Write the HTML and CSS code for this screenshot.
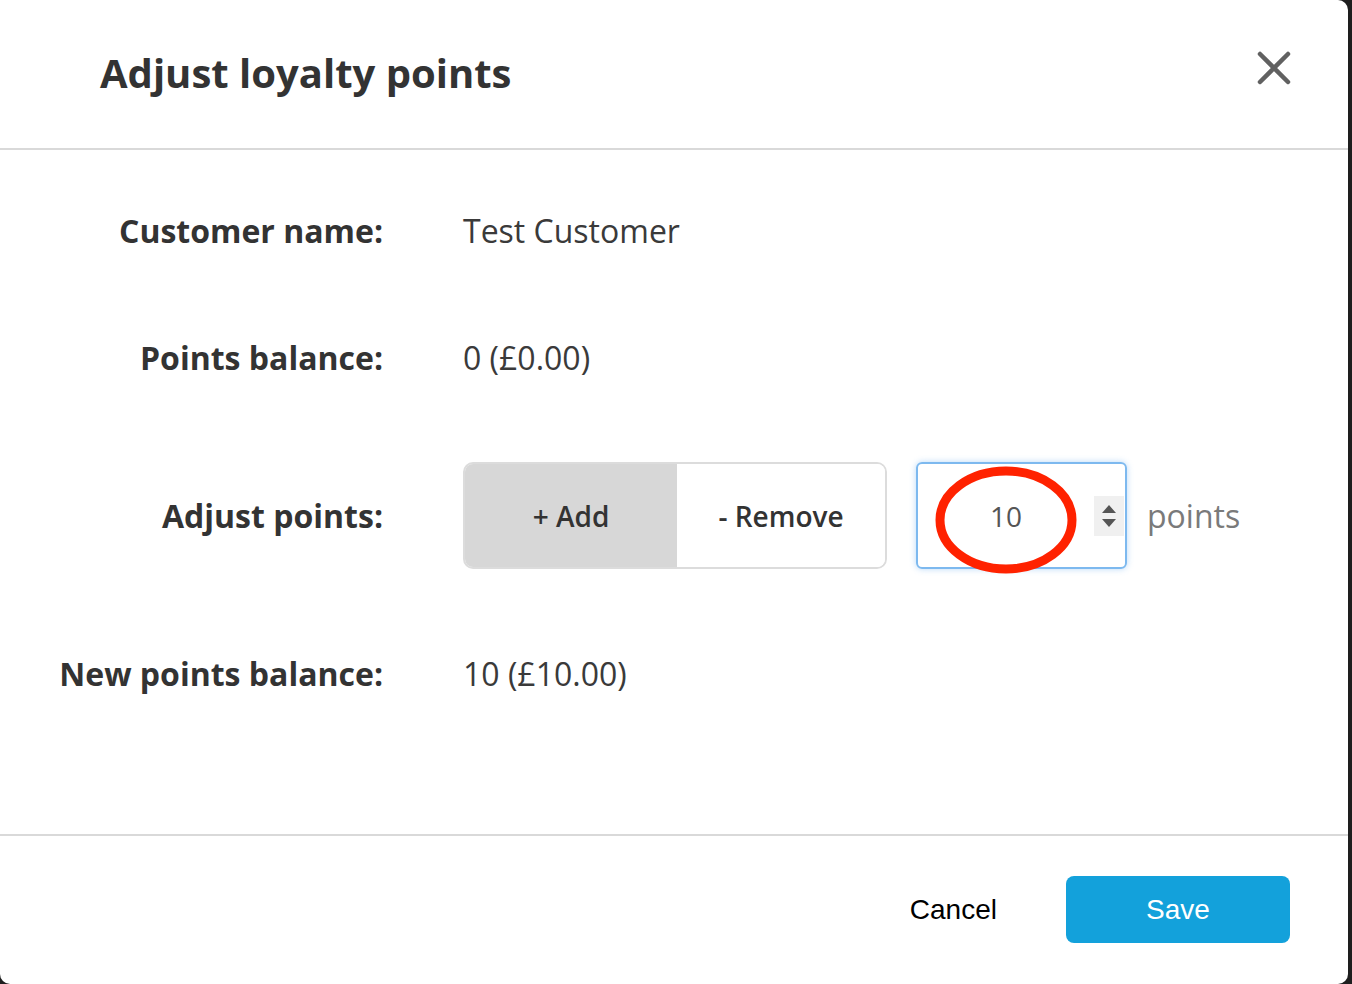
FILE: index.html
```html
<!DOCTYPE html>
<html lang="en">
<head>
<meta charset="utf-8">
<title>Adjust loyalty points</title>
<link rel="stylesheet" href="styles.css">
</head>
<body>
<div class="modal">
  <header class="modal-header">
    <h1 class="modal-title">Adjust loyalty points</h1>
    <button class="close-btn" aria-label="Close">
      <svg width="34" height="34" viewBox="0 0 34 34"><path d="M3 3 L31 31 M31 3 L3 31" stroke="#616161" stroke-width="4.5" stroke-linecap="round" fill="none"/></svg>
    </button>
  </header>
  <section class="modal-body">
    <div class="row row-first">
      <div class="label">Customer name:</div>
      <div class="value">Test Customer</div>
    </div>
    <div class="row row-second">
      <div class="label">Points balance:</div>
      <div class="value">0 (£0.00)</div>
    </div>
    <div class="row row-adjust">
      <div class="label">Adjust points:</div>
      <div class="value adjust-controls">
        <div class="segmented">
          <button class="seg seg-active">+ Add</button>
          <button class="seg">- Remove</button>
        </div>
        <div class="number-input">
          <span class="number-value">10</span>
          <span class="spinner">
            <svg width="30" height="40" viewBox="0 0 30 40"><path d="M8 17 L15 9 L22 17 Z M8 23 L22 23 L15 31 Z" fill="#555"/></svg>
          </span>
          <svg class="annotation" width="142" height="108" viewBox="0 0 142 108"><ellipse cx="71" cy="54" rx="66" ry="49" fill="none" stroke="#ff2200" stroke-width="9"/></svg>
        </div>
        <span class="unit">points</span>
      </div>
    </div>
    <div class="row row-last">
      <div class="label">New points balance:</div>
      <div class="value">10 (£10.00)</div>
    </div>
  </section>
  <footer class="modal-footer">
    <button class="btn-cancel">Cancel</button>
    <button class="btn-save">Save</button>
  </footer>
</div>
</body>
</html>
```
FILE: styles.css
```css
html, body {
  margin: 0;
  padding: 0;
}
body {
  background: #1e1e1e;
  width: 1352px;
  height: 984px;
  overflow: hidden;
  font-family: "Open Sans", "Noto Sans", sans-serif;
  color: #333;
}
.modal {
  width: 1348px;
  height: 984px;
  background: #fff;
  border-radius: 0 10px 10px 10px;
  display: flex;
  flex-direction: column;
}
.modal-header {
  height: 148px;
  border-bottom: 2px solid #d9d9d9;
  display: flex;
  align-items: center;
  justify-content: space-between;
  padding: 0 57px 0 100px;
}
.modal-title {
  margin: -4px 0 0 0;
  font-size: 40px;
  font-weight: 700;
  color: #333;
}
.close-btn {
  border: 0;
  background: none;
  padding: 0;
  width: 34px;
  height: 34px;
  margin-top: -12px;
  display: flex;
}
.modal-body {
  flex: 1;
  padding-top: 48px;
}
.row {
  display: flex;
  align-items: center;
  height: 64px;
}
.row-second { margin-top: 63px; }
.row-adjust { margin-top: 73px; height: 107px; }
.row-last { margin-top: 72px; }
.label {
  width: 383px;
  text-align: right;
  font-size: 32px;
  font-weight: 700;
  color: #333;
}
.value {
  margin-left: 80px;
  font-size: 32px;
  color: #3a3a3a;
}
.adjust-controls {
  display: flex;
  align-items: center;
  height: 107px;
}
.segmented {
  display: flex;
  width: 424px;
  height: 107px;
  box-sizing: border-box;
  border: 2px solid #dcdcdc;
  border-radius: 10px;
  overflow: hidden;
}
.seg {
  border: 0;
  background: #fff;
  font-family: "Open Sans", "Noto Sans", sans-serif;
  font-size: 28px;
  font-weight: 600;
  color: #333;
  padding: 0;
  flex: 1;
}
.seg-active {
  flex: 0 0 212px;
  background: #d7d7d7;
}
.number-input {
  position: relative;
  margin-left: 29px;
  width: 211px;
  height: 107px;
  box-sizing: border-box;
  border: 2px solid #7db9ef;
  border-radius: 6px;
  box-shadow: 0 0 6px rgba(100, 170, 240, 0.45);
  display: flex;
  align-items: center;
}
.number-value {
  flex: 1;
  text-align: center;
  font-size: 28px;
  color: #555;
}
.spinner {
  width: 30px;
  height: 40px;
  background: #f0f0f0;
  margin-right: 1px;
  display: flex;
}
.annotation {
  position: absolute;
  left: 17px;
  top: 2px;
}
.unit {
  margin-left: 20px;
  font-size: 32px;
  color: #7a7a7a;
}
.modal-footer {
  height: 150px;
  border-top: 2px solid #d9d9d9;
  display: flex;
  justify-content: flex-end;
  align-items: flex-start;
  padding: 40px 58px 0 0;
  box-sizing: border-box;
}
.btn-cancel {
  border: 0;
  background: none;
  font-family: "Liberation Sans", Arial, sans-serif;
  font-size: 28px;
  color: #000;
  height: 67px;
  padding: 0;
  margin-right: 69px;
}
.btn-save {
  border: 0;
  background: #13a1db;
  color: #fff;
  font-family: "Liberation Sans", Arial, sans-serif;
  font-size: 28px;
  width: 224px;
  height: 67px;
  border-radius: 8px;
}
```
